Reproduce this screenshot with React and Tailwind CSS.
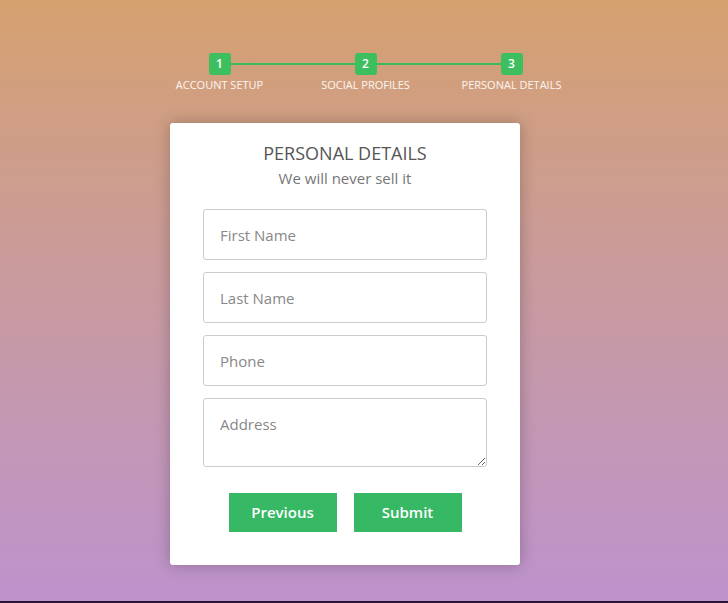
export default function App() {
  const steps = ['ACCOUNT SETUP', 'SOCIAL PROFILES', 'PERSONAL DETAILS'];
  return (
    <div
      className="h-[603px] w-full flex flex-col items-center bg-gradient-to-b from-[#d5a06e] to-[#bd92cc] border-b-2 border-[#2a1436]"
      style={{ fontFamily: '"Open Sans", "Liberation Sans", sans-serif' }}
    >
      <div className="relative ml-[3px] mt-[53px] flex w-[438px]">
        <div className="absolute left-[73px] right-[73px] top-[10px] h-[2px] bg-[#3dbb5c]" />
        {steps.map((label, i) => (
          <div key={label} className="relative flex w-[146px] flex-col items-center">
            <div className="flex h-[22px] w-[22px] items-center justify-center rounded-[3px] bg-[#3dbf5f] text-[12px] font-semibold text-white">
              {i + 1}
            </div>
            <div className="mt-[3px] text-[11px] leading-[14px] text-white/90">{label}</div>
          </div>
        ))}
      </div>

      <div className="mr-[38px] mt-[31px] flex w-[350px] flex-col items-center rounded-[3px] bg-white px-[33px] pt-[18px] pb-[33px] shadow-[0_0_15px_rgba(0,0,0,0.25)]">
        <h2 className="text-[18px] leading-[24px] text-[#555]">PERSONAL DETAILS</h2>
        <p className="mt-[3px] text-[15px] leading-[20px] text-[#777]">We will never sell it</p>

        <div className="mt-[21px] flex w-full flex-col gap-[12px]">
          {['First Name', 'Last Name', 'Phone'].map((p) => (
            <input
              key={p}
              placeholder={p}
              className="h-[51px] w-full rounded-[3px] border border-[#ccc] px-[16px] text-[15px] text-[#555] placeholder:text-[#888] outline-none"
            />
          ))}
          <textarea
            placeholder="Address"
            className="h-[69px] w-full rounded-[3px] border border-[#ccc] px-[16px] py-[14px] text-[15px] text-[#555] placeholder:text-[#888] outline-none"
          />
        </div>

        <div className="mt-[26px] flex gap-[17px]">
          <button className="h-[39px] w-[108px] bg-[#36b865] text-[15px] font-semibold text-white">Previous</button>
          <button className="h-[39px] w-[108px] bg-[#36b865] text-[15px] font-semibold text-white">Submit</button>
        </div>
      </div>
    </div>
  );
}
